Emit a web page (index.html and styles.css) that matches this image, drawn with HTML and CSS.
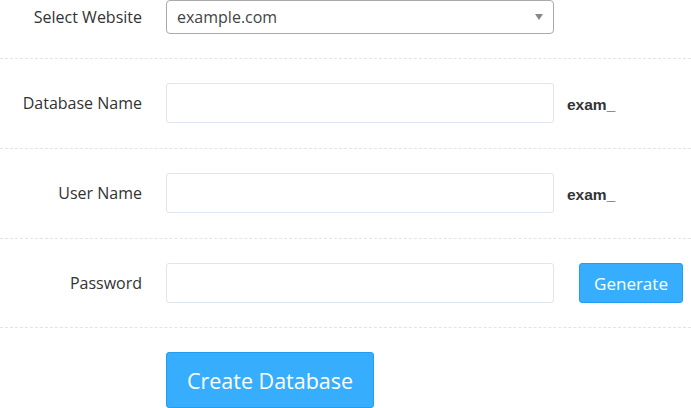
FILE: index.html
```html
<!DOCTYPE html>
<html lang="en">
<head>
<meta charset="utf-8">
<title>Create Database</title>
<link rel="stylesheet" href="styles.css">
</head>
<body>
<form class="form">
  <div class="row row-first">
    <label class="label">Select Website</label>
    <div class="select">
      <span class="select-text">example.com</span>
      <span class="select-arrow"></span>
    </div>
  </div>
  <div class="row row-spaced">
    <label class="label">Database Name</label>
    <input class="input" type="text">
    <span class="prefix">exam_</span>
  </div>
  <div class="row row-spaced">
    <label class="label">User Name</label>
    <input class="input" type="text">
    <span class="prefix">exam_</span>
  </div>
  <div class="row">
    <label class="label">Password</label>
    <input class="input" type="text">
    <button type="button" class="btn btn-generate">Generate</button>
  </div>
  <div class="row row-last">
    <span class="label"></span>
    <button type="button" class="btn btn-create">Create Database</button>
  </div>
</form>
</body>
</html>
```

FILE: styles.css
```css
* { box-sizing: border-box; }
html, body { margin: 0; padding: 0; background: #fff; }
body {
  font-family: "Open Sans", "DejaVu Sans", sans-serif;
  color: #333;
  width: 691px;
  height: 408px;
  overflow: hidden;
}
.form { display: flex; flex-direction: column; }
.row {
  display: flex;
  align-items: center;
  padding: 24px 0 24px;
  border-bottom: 1px dashed #e4e4e4;
}
.row-spaced { padding-bottom: 25px; }
.row-first { padding-top: 0; }
.row-last { border-bottom: none; padding-bottom: 0; }
.label {
  width: 142px;
  flex: none;
  text-align: right;
  font-size: 16px;
  color: #333;
  margin-right: 24px;
}
.select {
  width: 388px;
  height: 34px;
  border: 1px solid #aaa;
  border-radius: 4px;
  display: flex;
  align-items: center;
  justify-content: space-between;
  padding: 0 10px 0 10px;
}
.select-text { font-size: 16px; color: #444; }
.select-arrow {
  width: 0; height: 0;
  border-style: solid;
  border-width: 6px 4px 0 4px;
  border-color: #888 transparent transparent transparent;
}
.input {
  width: 388px;
  height: 40px;
  border: 1px solid #dfe6ee;
  border-radius: 3px;
  font-family: inherit;
  font-size: 16px;
  padding: 0 10px;
  outline: none;
}
.prefix {
  margin-left: 13px;
  font-family: "Liberation Sans", Arial, sans-serif;
  font-weight: bold;
  font-size: 15.5px;
  color: #333;
  position: relative;
  top: 2px;
}
.btn {
  font-family: "Open Sans", sans-serif;
  color: #fff;
  background: #37aefd;
  border: 1px solid #1f9ef2;
  border-radius: 3px;
  cursor: pointer;
}
.btn-generate {
  margin-left: 25px;
  width: 104px;
  height: 40px;
  font-size: 17px;
  padding: 0;
}
.btn-create {
  width: 208px;
  height: 56px;
  font-size: 21.5px;
  padding: 0;
}
```
